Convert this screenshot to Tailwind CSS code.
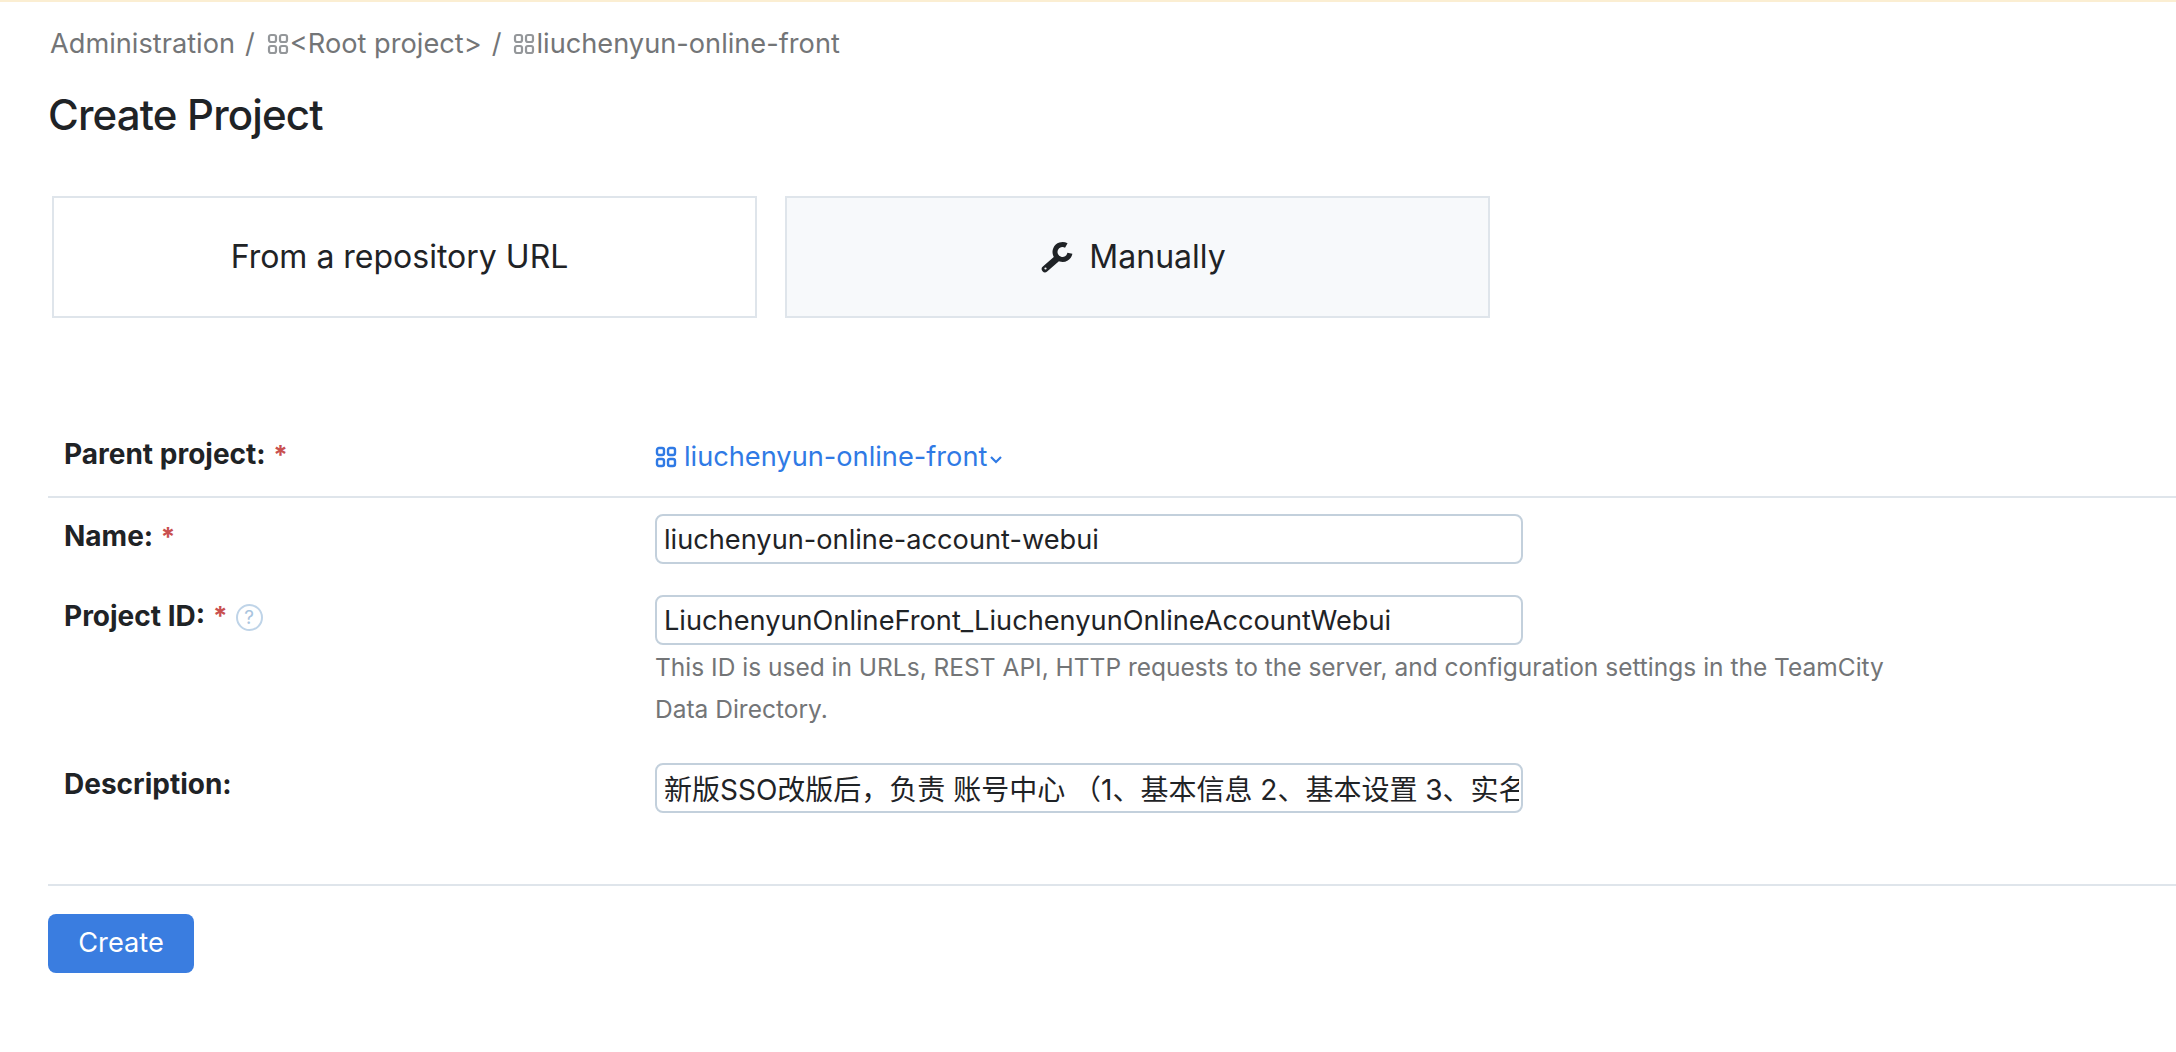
<!DOCTYPE html>
<html lang="en">
<head>
    <meta charset="UTF-8">
    <title>Create Project</title>
    <script src="https://cdn.jsdelivr.net/npm/@tailwindcss/browser@4"></script>
</head>
<body class="bg-white text-[#1f2326] font-['Inter','Noto_Sans_CJK_SC',sans-serif] overflow-hidden">
    <div class="h-[2px] bg-[#fbeed2]"></div>

    <main class="pl-[48px]">
        <!-- Breadcrumb -->
        <nav class="flex items-center h-[42px] mt-[21px] pl-[2px] text-[27.2px] text-[#737577]">
            <span>Administration</span>
            <span class="ml-[10px] mr-[12px]">/</span>
            <svg class="w-[22px] h-[22px] mr-[1px] text-[#94979a]" viewBox="0 0 22 22" fill="none" stroke="currentColor" stroke-width="2.2">
                <rect x="2" y="2" width="7" height="7" rx="2"/><rect x="13" y="2" width="7" height="7" rx="2"/>
                <rect x="2" y="13" width="7" height="7" rx="2"/><rect x="13" y="13" width="7" height="7" rx="2"/>
            </svg>
            <span>&lt;Root project&gt;</span>
            <span class="ml-[10px] mr-[12px]">/</span>
            <svg class="w-[22px] h-[22px] mr-[1px] text-[#94979a]" viewBox="0 0 22 22" fill="none" stroke="currentColor" stroke-width="2.2">
                <rect x="2" y="2" width="7" height="7" rx="2"/><rect x="13" y="2" width="7" height="7" rx="2"/>
                <rect x="2" y="13" width="7" height="7" rx="2"/><rect x="13" y="13" width="7" height="7" rx="2"/>
            </svg>
            <span>liuchenyun-online-front</span>
        </nav>

        <h1 class="mt-[25px] text-[42px] leading-[50px] font-medium tracking-[-0.02em]">Create Project</h1>

        <!-- Mode cards -->
        <div class="flex gap-[28px] mt-[56px] ml-[4px]">
            <div class="w-[705px] h-[122px] flex items-center justify-center pr-[10px] border-2 border-[#dfe5eb] text-[32px]">From a repository URL</div>
            <div class="w-[705px] h-[122px] flex items-center justify-center gap-[16px] pr-[10px] border-2 border-[#dfe5eb] bg-[#f7f9fb] text-[32px]">
                <svg class="w-[34px] h-[34px]" viewBox="0 0 34 34" fill="none" stroke="currentColor">
                    <path d="M27.3 5.5A7.5 7.5 0 1 0 30.9 13.3" stroke-width="5"/>
                    <path d="M17.5 19L6 29" stroke-width="6.5" stroke-linecap="round"/>
                    <circle cx="6.5" cy="28.5" r="1.1" fill="#f7f9fb" stroke="none"/>
                </svg>
                <span>Manually</span>
            </div>
        </div>

        <!-- Form -->
        <form class="mt-[97px] text-[27.2px]">
            <div class="flex h-[83px] border-b-2 border-[#dfe5eb]">
                <div class="w-[607px] pl-[16px] text-[28px] font-bold leading-[36px] pt-[21px]">Parent project: <span class="text-[#c9504f] text-[26px] ml-[1px]">*</span></div>
                <a class="flex items-start gap-[7px] pt-[24px] leading-[36px] text-[#2f7ae5]">
                    <svg class="w-[22px] h-[22px] mt-[7px]" viewBox="0 0 22 22" fill="none" stroke="currentColor" stroke-width="2.4">
                        <rect x="2" y="2" width="7" height="7" rx="2"/><rect x="13" y="2" width="7" height="7" rx="2"/>
                        <rect x="2" y="13" width="7" height="7" rx="2"/><rect x="13" y="13" width="7" height="7" rx="2"/>
                    </svg>
                    <span>liuchenyun-online-front</span>
                    <svg class="w-[14px] h-[10px] mt-[16px] -ml-[5px]" viewBox="0 0 14 10" fill="none" stroke="currentColor" stroke-width="2.2"><path d="M2 2l5 5 5-5"/></svg>
                </a>
            </div>

            <div class="flex mt-[16px]">
                <label class="w-[607px] pl-[16px] text-[28px] font-bold leading-[36px] pt-[4px]">Name: <span class="text-[#c9504f] text-[26px] ml-[1px]">*</span></label>
                <input type="text" value="liuchenyun-online-account-webui"
                    class="w-[868px] h-[50px] border-2 border-[#c3d0dc] rounded-[8px] pl-[7px] pr-[2px] outline-0">
            </div>

            <div class="flex mt-[31px]">
                <label class="w-[607px] pl-[16px] text-[28px] font-bold leading-[36px] pt-[3px] flex items-start">
                    <span>Project ID:</span>
                    <span class="text-[#c9504f] text-[26px] ml-[8px]">*</span>
                    <span class="ml-[8px] mt-[6px] w-[27px] h-[27px] rounded-full border-2 border-[#bfd4e8] text-[#a9c4de] text-[19px] leading-[23px] text-center font-normal">?</span>
                </label>
                <div>
                    <input type="text" value="LiuchenyunOnlineFront_LiuchenyunOnlineAccountWebui"
                        class="block w-[868px] h-[50px] border-2 border-[#c3d0dc] rounded-[8px] pl-[7px] pr-[2px] outline-0">
                    <p class="w-[1270px] mt-[1px] text-[24.5px] leading-[42px] text-[#737577]">This ID is used in URLs, REST API, HTTP requests to the server, and configuration settings in the TeamCity Data Directory.</p>
                </div>
            </div>

            <div class="flex mt-[33px]">
                <label class="w-[607px] pl-[16px] text-[28px] font-bold leading-[36px] pt-[3px]">Description:</label>
                <input type="text" value="新版SSO改版后，负责 账号中心 （1、基本信息 2、基本设置 3、实名认证 4、账号安全）"
                    class="w-[868px] h-[50px] border-2 border-[#c3d0dc] rounded-[8px] pl-[7px] pr-[2px] text-[28px] outline-0">
            </div>

            <div class="mt-[71px] pt-[28px] border-t-2 border-[#dfe5eb]">
                <button type="button" class="w-[146px] h-[59px] rounded-[8px] bg-[#3a7de0] text-white">Create</button>
            </div>
        </form>
    </main>
</body>
</html>
